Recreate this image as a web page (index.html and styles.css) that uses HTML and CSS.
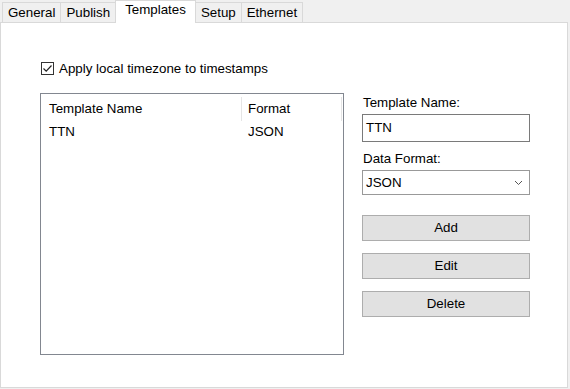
FILE: index.html
```html
<!DOCTYPE html>
<html lang="en">
  <head>
    <meta charset="UTF-8" />
    <meta name="viewport" content="width=device-width, initial-scale=1.0" />
    <title>Templates</title>
    <link rel="stylesheet" href="styles.css">
  </head>
  <body>
    <div class="tabs">
      <div class="tab">General</div>
      <div class="tab">Publish</div>
      <div class="tab active">Templates</div>
      <div class="tab">Setup</div>
      <div class="tab">Ethernet</div>
    </div>
    <div class="panel">
      <label class="check">
        <span class="box">
          <svg width="11" height="11" viewBox="0 0 11 11">
            <polyline points="1.5,5.5 4.2,8.2 9.5,2.5" fill="none" stroke="#222" stroke-width="1.2" />
          </svg>
        </span>
        Apply local timezone to timestamps
      </label>
      <div class="content">
        <div class="list">
          <div class="list-head">
            <div class="col name">Template Name</div>
            <div class="col fmt">Format</div>
          </div>
          <div class="list-row">
            <div class="col name">TTN</div>
            <div class="col fmt">JSON</div>
          </div>
        </div>
        <div class="side">
          <div class="label">Template Name:</div>
          <div class="input">TTN</div>
          <div class="label second">Data Format:</div>
          <div class="combo">
            <span>JSON</span>
            <svg width="9" height="6" viewBox="0 0 9 6">
              <polyline points="1,1 4.5,4.5 8,1" fill="none" stroke="#555" stroke-width="1" />
            </svg>
          </div>
          <div class="btn first">Add</div>
          <div class="btn">Edit</div>
          <div class="btn">Delete</div>
        </div>
      </div>
    </div>
  </body>
</html>
```

FILE: styles.css
```css
* {
  margin: 0;
  padding: 0;
  box-sizing: border-box;
}
body {
  background: #f0f0f0;
  font-family: "Liberation Sans", Arial, sans-serif;
  font-size: 13.33px;
  color: #000;
  width: 570px;
  height: 389px;
  overflow: hidden;
}
.tabs {
  display: flex;
  align-items: flex-end;
  height: 22px;
  padding-left: 2px;
}
.tab {
  height: 20px;
  line-height: 19px;
  padding: 0 5px;
  border: 1px solid #d9d9d9;
  border-bottom: none;
  margin-left: -1px;
  background: #f0f0f0;
}
.tab:first-child {
  margin-left: 0;
}
.tab.active {
  position: relative;
  z-index: 1;
  height: 23px;
  line-height: 18px;
  padding: 0 9px;
  margin-bottom: -1px;
  background: #fff;
}
.panel {
  width: 568px;
  height: 366px;
  background: #fff;
  border: 1px solid #d9d9d9;
  padding: 37px 0 0 39px;
}
.check {
  display: flex;
  align-items: center;
  gap: 5px;
  height: 16px;
  margin-left: 1px;
}
.check .box {
  width: 13px;
  height: 13px;
  border: 1px solid #333;
  display: flex;
  align-items: center;
  justify-content: center;
}
.content {
  display: flex;
  align-items: flex-start;
  gap: 18px;
  margin-top: 17px;
}
.list {
  width: 304px;
  height: 262px;
  border: 1px solid #828790;
}
.list-head,
.list-row {
  display: flex;
}
.list-head {
  height: 29px;
  align-items: center;
}
.list-head .col {
  border-right: 1px solid #e5e5e5;
  height: 24px;
  line-height: 24px;
}
.list-row {
  height: 17px;
  line-height: 17px;
}
.col.name {
  width: 201px;
  padding-left: 8px;
}
.col.fmt {
  width: 100px;
  padding-left: 6px;
}
.side {
  width: 168px;
  margin-top: 2px;
}
.label {
  height: 16px;
  line-height: 16px;
  padding-left: 1px;
}
.label.second {
  margin-top: 9px;
}
.input {
  height: 28px;
  margin-top: 3px;
  border: 1px solid #7a7a7a;
  padding-left: 3px;
  line-height: 26px;
}
.combo {
  height: 25px;
  margin-top: 3px;
  border: 1px solid #999;
  padding: 0 6px 0 3px;
  display: flex;
  align-items: center;
  justify-content: space-between;
}
.btn {
  height: 26px;
  margin-top: 12px;
  border: 1px solid #adadad;
  background: #e1e1e1;
  text-align: center;
  line-height: 24px;
}
.btn.first {
  margin-top: 20px;
}
```
